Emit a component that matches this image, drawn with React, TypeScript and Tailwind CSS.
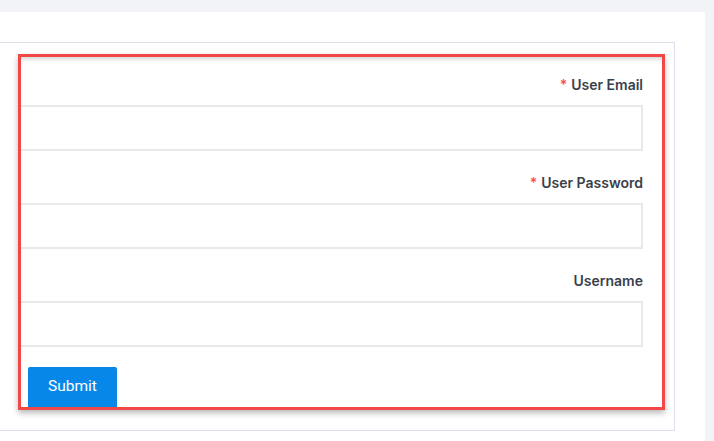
const fields = [
  { label: "User Email", required: true },
  { label: "User Password", required: true },
  { label: "Username", required: false },
];

export default function App() {
  return (
    <div
      className="h-[441px] w-[714px] overflow-hidden bg-[#f2f3f7] pt-[12px] pr-[9px]"
      style={{ fontFamily: "Inter, 'Noto Sans', sans-serif" }}
    >
      <div className="h-full bg-white pt-[30px] pr-[30px]">
        <div className="border border-l-0 border-[#dedfe8] pt-[11px] pr-[9px] pb-[20px] pl-[18px]">
          <div className="overflow-hidden border-[3px] border-[#f24747] pt-[16px] pr-[19px] shadow-[0_3px_6px_rgba(0,0,0,0.28),inset_0_5px_5px_-3px_rgba(0,0,0,0.18)]">
            {fields.map((f) => (
              <div key={f.label} className="mb-[20px]">
                <div className="mb-[10px] flex h-[22px] items-center justify-end text-[14px] font-semibold text-[#3a3f4b]">
                  {f.required && <span className="mr-[4px] text-[#ff4d4f]">*</span>}
                  {f.label}
                </div>
                <input
                  type="text"
                  className="block h-[46px] w-full border-2 border-l-0 border-[#e9e9e9] bg-white outline-none"
                />
              </div>
            ))}
            <button
              className="ml-[7px] h-[40px] w-[89px] rounded-t-[2px] bg-[#0788e8] text-[15.5px] text-white"
              style={{ fontFamily: "Roboto, 'Liberation Sans', sans-serif" }}
            >
              Submit
            </button>
          </div>
        </div>
      </div>
    </div>
  );
}
